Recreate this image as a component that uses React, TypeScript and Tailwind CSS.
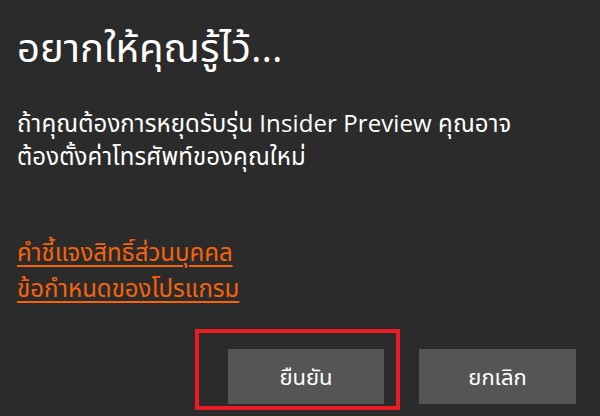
import React from 'react';

const App: React.FC = () => {
  return (
    <div
      className="relative w-[600px] h-[416px] bg-[#2b2b2b] text-white overflow-hidden"
      style={{ fontFamily: '"Open Sans", "Noto Sans", "Noto Sans Thai", sans-serif' }}
    >
      <div className="flex flex-col px-[17px] pt-[21px]">
        <h1 className="text-[40px] leading-[52px] font-normal">อยากให้คุณรู้ไว้...</h1>
        <p className="mt-[33px] text-[24px] leading-[33px] tracking-[0.1px]">
          ถ้าคุณต้องการหยุดรับรุ่น Insider Preview คุณอาจ
          <br />
          ต้องตั้งค่าโทรศัพท์ของคุณใหม่
        </p>
        <div className="mt-[62px] flex flex-col text-[24px] leading-[36px] text-[#f7630c]">
          <a className="underline underline-offset-4 self-start">คำชี้แจงสิทธิ์ส่วนบุคคล</a>
          <a className="underline underline-offset-4 self-start">ข้อกำหนดของโปรแกรม</a>
        </div>
      </div>

      <div className="absolute left-0 right-0 bottom-[12px] flex justify-end gap-[35px] pr-[24px]">
        <button className="w-[156px] h-[55px] bg-[#555555] text-[22px] text-white">ยืนยัน</button>
        <button className="w-[157px] h-[55px] bg-[#555555] text-[22px] text-white">ยกเลิก</button>
      </div>

      <div className="absolute left-[195px] top-[329px] w-[205px] h-[81px] border-4 border-[#ed1c24]" />
    </div>
  );
};

export default App;
